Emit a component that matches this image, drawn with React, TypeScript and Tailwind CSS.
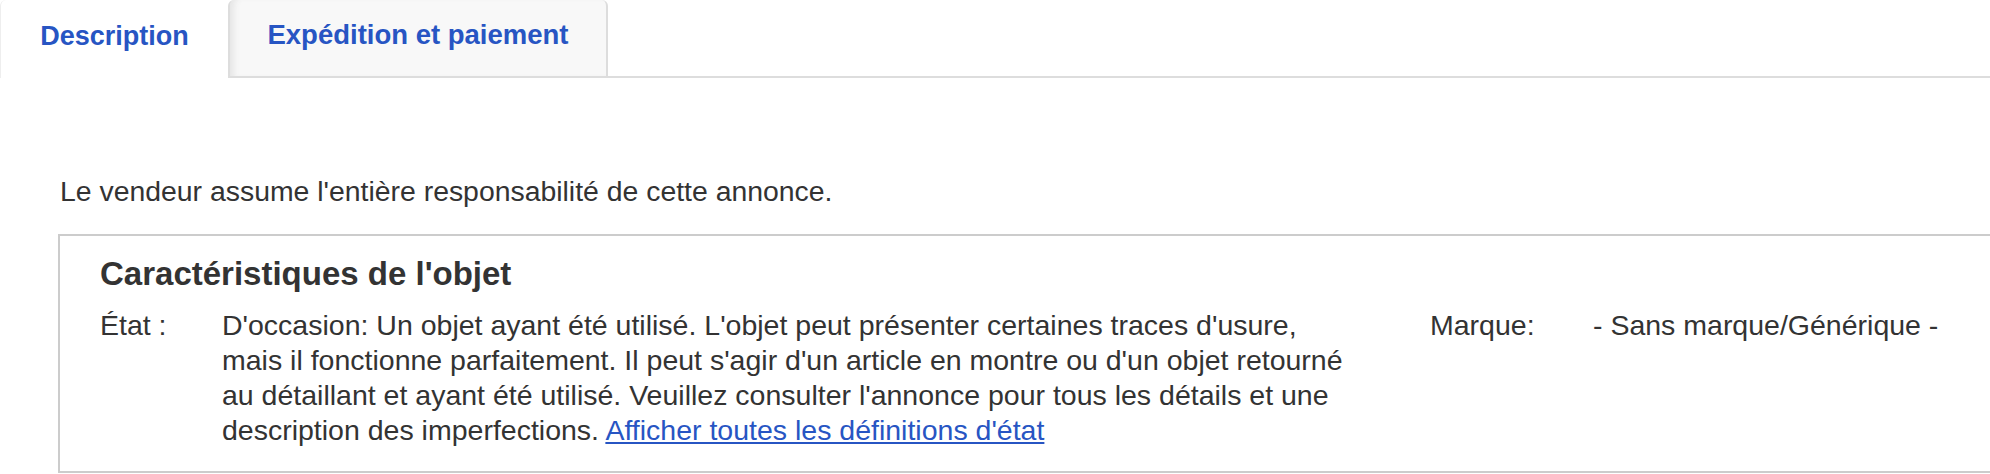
export default function App() {
  return (
    <div className="w-[1990px] h-[474px] overflow-hidden bg-white font-['Liberation_Sans',Arial,sans-serif] text-[#333]">
      {/* Tabs */}
      <div className="flex h-[78px]">
        <div className="w-[228px] flex items-center justify-center pb-[6px] border-l border-[#eeeeee] rounded-tl-md">
          <span className="text-[27px] font-bold text-[#2755c3]">Description</span>
        </div>
        <div className="w-[380px] flex items-center justify-center pb-[6px] bg-[#f8f8f8] border-x-2 border-b-2 border-[#dddddd] rounded-t-md shadow-[inset_8px_0_6px_-4px_#e6e6e6]">
          <span className="text-[27.5px] font-bold text-[#2755c3]">Expédition et paiement</span>
        </div>
        <div className="flex-1 border-b-2 border-[#dddddd]" />
      </div>

      {/* Content */}
      <div className="pl-[58px] pt-[96px]">
        <p className="pl-[2px] text-[28.4px] leading-[35px]">Le vendeur assume l'entière responsabilité de cette annonce.</p>

        <div className="mt-[25px] border-2 border-r-0 border-[#cccccc] pl-[40px] pt-[18px] pb-[23px]">
          <h2 className="text-[33px] font-bold leading-[40px]">Caractéristiques de l'objet</h2>
          <div className="mt-[14px] flex text-[28.5px] leading-[35px]">
            <div className="w-[122px] shrink-0">État :</div>
            <div className="w-[1160px] shrink-0 whitespace-nowrap">
              D'occasion: Un objet ayant été utilisé. L'objet peut présenter certaines traces d'usure,
              <br />
              mais il fonctionne parfaitement. Il peut s'agir d'un article en montre ou d'un objet retourné
              <br />
              au détaillant et ayant été utilisé. Veuillez consulter l'annonce pour tous les détails et une
              <br />
              description des imperfections.{" "}
              <a href="#" className="text-[#2755c3] underline">
                Afficher toutes les définitions d'état
              </a>
            </div>
            <div className="ml-[48px] w-[163px] shrink-0">Marque:</div>
            <div className="shrink-0">- Sans marque/Générique -</div>
          </div>
        </div>
      </div>
    </div>
  );
}
